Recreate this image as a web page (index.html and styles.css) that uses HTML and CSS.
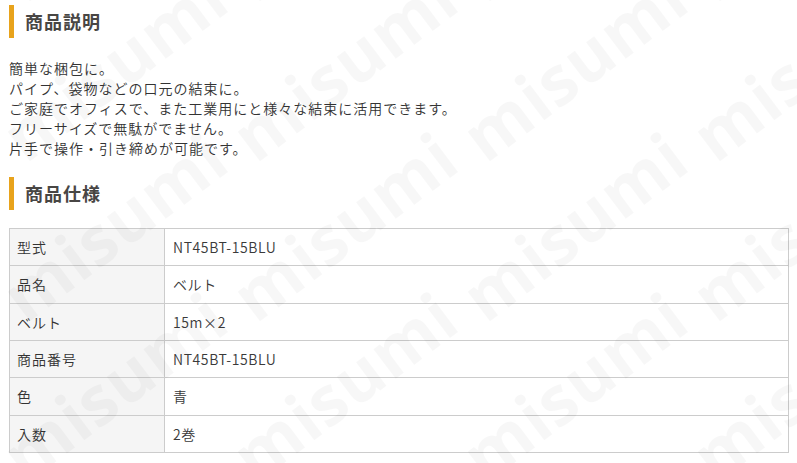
FILE: index.html
```html
<!DOCTYPE html>
<html lang="ja">
<head>
<meta charset="utf-8">
<title>商品説明</title>
<link rel="stylesheet" href="styles.css">
</head>
<body>
<div class="page">
  <h2 class="ttl">商品説明</h2>
  <p class="desc">簡単な梱包に。<br>パイプ、袋物などの口元の結束に。<br>ご家庭でオフィスで、また工業用にと様々な結束に活用できます。<br>フリーサイズで無駄がでません。<br>片手で操作・引き締めが可能です。</p>

  <h2 class="ttl ttl-spec">商品仕様</h2>
  <table class="spec">
    <tbody>
      <tr><th>型式</th><td>NT45BT-15BLU</td></tr>
      <tr><th>品名</th><td>ベルト</td></tr>
      <tr><th>ベルト</th><td>15m×2</td></tr>
      <tr><th>商品番号</th><td>NT45BT-15BLU</td></tr>
      <tr><th>色</th><td>青</td></tr>
      <tr><th>入数</th><td>2巻</td></tr>
    </tbody>
  </table>

  <div class="wm-clip" aria-hidden="true">
    <div class="wm-grid">
      <span class="wm">misumi</span><span class="wm">misumi</span><span class="wm">misumi</span><span class="wm">misumi</span>
      <span class="wm">misumi</span><span class="wm">misumi</span><span class="wm">misumi</span><span class="wm">misumi</span>
      <span class="wm">misumi</span><span class="wm">misumi</span><span class="wm">misumi</span><span class="wm">misumi</span>
      <span class="wm">misumi</span><span class="wm">misumi</span><span class="wm">misumi</span><span class="wm">misumi</span>
    </div>
  </div>
</div>
</body>
</html>
```

FILE: styles.css
```css
html, body {
  margin: 0;
  padding: 0;
  background: #ffffff;
}

body {
  font-family: "Noto Sans CJK JP", "Noto Sans", sans-serif;
  font-weight: 350;
  color: #333333;
  font-size: 14px;
  letter-spacing: 1px;
}

.page {
  position: relative;
  padding: 5px 8px 20px 9px;
  min-height: 440px;
}

/* faint diagonal watermark overlay */
.wm-clip {
  position: absolute;
  top: 0;
  left: 0;
  right: 0;
  bottom: 0;
  overflow: hidden;
  pointer-events: none;
}

.wm-grid {
  display: grid;
  grid-template-columns: repeat(4, 230px);
  grid-auto-rows: 160px;
  margin: -56px 0 0 27px;
}

.wm {
  display: block;
  font-family: "Open Sans", "Liberation Sans", sans-serif;
  font-weight: 700;
  font-size: 68px;
  line-height: 68px;
  letter-spacing: 1px;
  color: rgba(0, 0, 0, 0.03);
  white-space: nowrap;
  transform-origin: 0 62px;
  transform: rotate(-37deg);
}

/* headings */
.ttl {
  margin: 0;
  height: 33px;
  line-height: 33px;
  border-left: 5px solid #e8a31c;
  padding-left: 11px;
  font-size: 18px;
  font-weight: 700;
  letter-spacing: 1px;
  color: #484644;
}

.ttl-spec {
  margin-top: 19px;
}

.desc {
  margin: 20px 0 0;
  line-height: 20px;
  font-size: 14px;
  color: #333333;
}

/* spec table */
.spec {
  width: 100%;
  margin-top: 18px;
  border-collapse: separate;
  border-spacing: 0;
  border-top: 1px solid #cccccc;
  border-left: 1px solid #cccccc;
  font-size: 14px;
}

.spec th,
.spec td {
  box-sizing: border-box;
  height: 37.33px;
  padding: 0 8px;
  border-right: 1px solid #cccccc;
  border-bottom: 1px solid #cccccc;
  text-align: left;
  vertical-align: middle;
  font-weight: 350;
  color: #333333;
}

.spec th {
  width: 155px;
  padding-left: 7px;
  background: #f5f5f5;
}

.spec td {
  letter-spacing: 0.6px;
  color: #3a3a3a;
}
```
